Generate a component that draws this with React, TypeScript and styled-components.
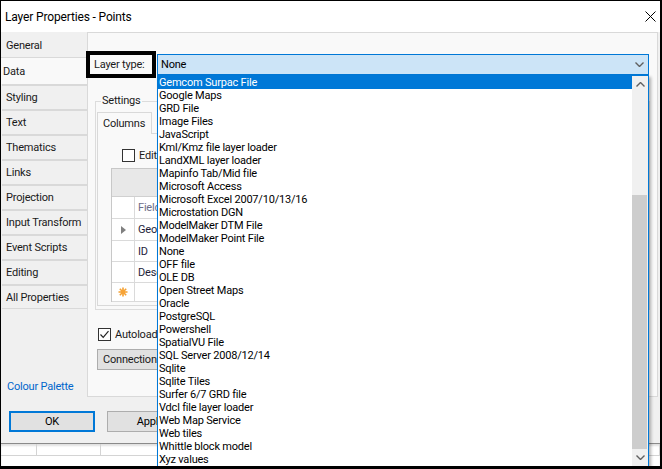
import React from "react";
import styled, { createGlobalStyle } from "styled-components";

const FONT = `Roboto, "Noto Sans", "DejaVu Sans", sans-serif`;

const GlobalStyle = createGlobalStyle`
  html, body { margin: 0; padding: 0; background: #ffffff; }
  body { font-family: ${FONT}; font-size: 11px; }
  *, *::before, *::after { box-sizing: border-box; }
`;

const Frame = styled.div`
  position: relative;
  width: 662px;
  height: 469px;
  border-style: solid;
  border-color: #000;
  border-width: 1px 2px 3px 1px;
  overflow: hidden;
  display: flex;
  flex-direction: column;
  background: #fff;
  font-family: ${FONT};
  font-size: 11px;
  letter-spacing: -0.2px;
  color: #000;
`;

const Window = styled.div`
  flex: 0 0 443px;
  display: flex;
  flex-direction: column;
  background: #f0f0f0;
  border-bottom: 1px solid #8a8a8a;
`;

const TitleBar = styled.div`
  flex: 0 0 31px;
  background: #fff;
  display: flex;
  align-items: center;
  justify-content: space-between;
  padding: 0 4px 0 4px;
`;

const Title = styled.span`
  font-size: 12px;
  line-height: 16px;
  letter-spacing: -0.15px;
`;

const Body = styled.div`
  flex: 0 0 365px;
  display: flex;
`;

const Sidebar = styled.nav`
  width: 86px;
  display: flex;
  flex-direction: column;
  padding-top: 1px;
`;

const SideTab = styled.div<{ $kind: "first" | "selected" | "normal"; $last?: boolean }>`
  display: flex;
  align-items: center;
  white-space: nowrap;
  height: ${(p) => (p.$kind === "first" ? 24 : p.$kind === "selected" ? 27 : 25)}px;
  margin-left: ${(p) => (p.$kind === "selected" ? 0 : 1)}px;
  padding-left: ${(p) => (p.$kind === "selected" ? 2 : 4)}px;
  background: ${(p) => (p.$kind === "selected" ? "#f9f9f9" : "#f0f0f0")};
  border-top: ${(p) => (p.$kind === "first" ? "0" : p.$kind === "selected" ? "1px" : "2px")} solid #d9d9d9;
  border-bottom: ${(p) => (p.$last ? "1px solid #d9d9d9" : "0")};
  color: #1a1a1a;
`;

const SideSpacer = styled.div`
  flex: 1;
`;

const PaletteLink = styled.a`
  color: #0066cc;
  padding: 0 0 3px 6px;
  line-height: 14px;
  text-decoration: none;
`;

const Panel = styled.section`
  width: 571px;
  border: 1px solid #d9d9d9;
  background: #f9f9f9;
  display: flex;
  flex-direction: column;
  align-items: flex-start;
`;

const TypeRow = styled.div`
  display: flex;
  align-items: flex-start;
  margin: 18px 0 0 -2px;
`;

const LabelBox = styled.div`
  width: 70px;
  height: 27px;
  border: 4px solid #000;
  padding-left: 4px;
  display: flex;
  align-items: center;
  white-space: nowrap;
  background: #f9f9f9;
  color: #1a1a1a;
`;

const Combo = styled.div`
  margin: 3px 0 0 1px;
  width: 492px;
  height: 21px;
  background: #cce4f7;
  border: 1px solid #0078d7;
  display: flex;
  align-items: center;
  justify-content: space-between;
  padding: 0 4px 0 3px;
`;

const GroupBox = styled.fieldset`
  margin: 15px 0 0 7px;
  width: 555px;
  border: 1px solid #dcdcdc;
  padding: 0 0 3px 1px;
  min-width: 0;
`;

const Legend = styled.legend`
  margin-left: 4px;
  padding: 0 1px;
  line-height: 16px;
  font-size: 11px;
  color: #1a1a1a;
`;

const TabStrip = styled.div`
  margin-top: 3px;
  height: 21px;
  display: flex;
`;

const TabHead = styled.div`
  position: relative;
  z-index: 1;
  width: 55px;
  height: 22px;
  border: 1px solid #d9d9d9;
  border-bottom: 0;
  background: #f9f9f9;
  padding-left: 5px;
  display: flex;
  align-items: center;
  color: #1a1a1a;
`;

const TabPage = styled.div`
  width: 550px;
  height: 173px;
  border: 1px solid #d9d9d9;
  background: #f9f9f9;
  display: flex;
  flex-direction: column;
  align-items: flex-start;
`;

const CheckRow = styled.label<{ $top: number; $left: number }>`
  display: flex;
  align-items: center;
  gap: 4px;
  margin: ${(p) => p.$top}px 0 0 ${(p) => p.$left}px;
  white-space: nowrap;
  line-height: 13px;
  color: #1a1a1a;
`;

const CheckBox = styled.span`
  width: 13px;
  height: 13px;
  border: 1px solid #333;
  background: #fff;
  display: flex;
  align-items: center;
  justify-content: center;
`;

const Grid = styled.div`
  margin: 6px 0 0 13px;
  width: 530px;
  height: 134px;
  border: 1px solid #c8c8c8;
  display: flex;
  flex-direction: column;
  background: #fff;
`;

const GridBand = styled.div`
  flex: 0 0 28px;
  background: #e8e8e8;
  border-bottom: 1px solid #d0d0d0;
`;

const GridRow = styled.div<{ $h: number }>`
  flex: 0 0 ${(p) => p.$h}px;
  display: flex;
  border-bottom: 1px solid #dadada;
`;

const RowHead = styled.div`
  width: 23px;
  border-right: 1px solid #dadada;
  display: flex;
  align-items: center;
  justify-content: center;
`;

const Cell = styled.div<{ $header?: boolean }>`
  flex: 1;
  display: flex;
  align-items: center;
  padding-left: 3px;
  color: ${(p) => (p.$header ? "#6d6d88" : "#1e1e3a")};
`;

const Button = styled.div<{ $focused?: boolean }>`
  width: 86px;
  height: 21px;
  background: #e1e1e1;
  border: ${(p) => (p.$focused ? "2px solid #0078d7" : "1px solid #adadad")};
  display: flex;
  align-items: center;
  justify-content: center;
  color: #000;
`;

const ConnButton = styled(Button)`
  width: 100px;
  justify-content: flex-start;
  padding-left: 5px;
  margin: 8px 0 0 9px;
  color: #1a1a1a;
`;

const Footer = styled.div`
  flex: 1;
  display: flex;
  align-items: flex-start;
  gap: 12px;
  padding: 14px 0 0 8px;
`;

const Backdrop = styled.div`
  flex: 1;
  display: flex;
  background: #fff;
  box-shadow: inset 0 2px 2px rgba(0, 0, 0, 0.12);
`;

const BackCell = styled.div<{ $w?: number }>`
  ${(p) => (p.$w ? `flex: 0 0 ${p.$w}px;` : "flex: 1;")}
  border-right: 1px solid #d4d4d4;
  border-bottom: 1px solid #d4d4d4;
  height: 12px;
`;

const DropList = styled.div`
  position: absolute;
  left: 156px;
  top: 74px;
  width: 492px;
  height: 392px;
  border: 1px solid #0078d7;
  background: #fff;
  box-shadow: 2px 2px 3px rgba(0, 0, 0, 0.3);
  display: flex;
  z-index: 5;
`;

const Items = styled.ul`
  flex: 1;
  list-style: none;
  margin: 0;
  padding: 0;
`;

const Item = styled.li<{ $selected?: boolean }>`
  height: 13px;
  line-height: 14px;
  padding-left: 1px;
  white-space: nowrap;
  background: ${(p) => (p.$selected ? "#0078d7" : "transparent")};
  color: ${(p) => (p.$selected ? "#fff" : "#000")};
`;

const ScrollBar = styled.div`
  width: 16px;
  background: #f0f0f0;
  display: flex;
  flex-direction: column;
`;

const ScrollBtn = styled.div`
  flex: 0 0 17px;
  display: flex;
  align-items: center;
  justify-content: center;
`;

const Track = styled.div`
  flex: 1;
  display: flex;
  flex-direction: column;
  justify-content: flex-end;
`;

const Thumb = styled.div`
  height: 254px;
  margin-right: 1px;
  background: #cdcdcd;
`;

const Chevron = ({ up, color = "#606060", w = 8 }: { up?: boolean; color?: string; w?: number }) => (
  <svg width={w + 1} height={w / 2 + 1} viewBox={`0 0 ${w + 1} ${w / 2 + 1}`}>
    <path
      d={up ? `M0.5 ${w / 2 + 0.5} L${w / 2 + 0.5} 0.5 L${w + 0.5} ${w / 2 + 0.5}` : `M0.5 0.5 L${w / 2 + 0.5} ${w / 2 + 0.5} L${w + 0.5} 0.5`}
      fill="none"
      stroke={color}
      strokeWidth="1.4"
    />
  </svg>
);

const sideTabs = [
  "General",
  "Data",
  "Styling",
  "Text",
  "Thematics",
  "Links",
  "Projection",
  "Input Transform",
  "Event Scripts",
  "Editing",
  "All Properties",
];

const layerTypes = [
  "Gemcom Surpac File",
  "Google Maps",
  "GRD File",
  "Image Files",
  "JavaScript",
  "Kml/Kmz file layer loader",
  "LandXML layer loader",
  "Mapinfo Tab/Mid file",
  "Microsoft Access",
  "Microsoft Excel 2007/10/13/16",
  "Microstation DGN",
  "ModelMaker DTM File",
  "ModelMaker Point File",
  "None",
  "OFF file",
  "OLE DB",
  "Open Street Maps",
  "Oracle",
  "PostgreSQL",
  "Powershell",
  "SpatialVU File",
  "SQL Server 2008/12/14",
  "Sqlite",
  "Sqlite Tiles",
  "Surfer 6/7 GRD file",
  "Vdcl file layer loader",
  "Web Map Service",
  "Web tiles",
  "Whittle block model",
  "Xyz values",
];

export default function App() {
  return (
    <>
      <GlobalStyle />
      <Frame>
        <Window>
          <TitleBar>
            <Title>Layer Properties - Points</Title>
            <svg width="11" height="11" viewBox="0 0 11 11">
              <path d="M0.5 0.5 L10.5 10.5 M10.5 0.5 L0.5 10.5" stroke="#000" strokeWidth="1" />
            </svg>
          </TitleBar>
          <Body>
            <Sidebar>
              {sideTabs.map((t, i) => (
                <SideTab
                  key={t}
                  $kind={i === 0 ? "first" : i === 1 ? "selected" : "normal"}
                  $last={i === sideTabs.length - 1}
                >
                  {t}
                </SideTab>
              ))}
              <SideSpacer />
              <PaletteLink>Colour Palette</PaletteLink>
            </Sidebar>
            <Panel>
              <TypeRow>
                <LabelBox>Layer type:</LabelBox>
                <Combo>
                  <span>None</span>
                  <Chevron />
                </Combo>
              </TypeRow>
              <GroupBox>
                <Legend>Settings</Legend>
                <TabStrip>
                  <TabHead>Columns</TabHead>
                </TabStrip>
                <TabPage>
                  <CheckRow $top={15} $left={24}>
                    <CheckBox />
                    Editable columns
                  </CheckRow>
                  <Grid>
                    <GridBand />
                    <GridRow $h={22}>
                      <RowHead />
                      <Cell $header>Field</Cell>
                    </GridRow>
                    <GridRow $h={22}>
                      <RowHead>
                        <svg width="5" height="8" viewBox="0 0 5 8">
                          <path d="M0 0 L5 4 L0 8 Z" fill="#808080" />
                        </svg>
                      </RowHead>
                      <Cell>Geometry</Cell>
                    </GridRow>
                    <GridRow $h={21}>
                      <RowHead />
                      <Cell>ID</Cell>
                    </GridRow>
                    <GridRow $h={21}>
                      <RowHead />
                      <Cell>Description</Cell>
                    </GridRow>
                    <GridRow $h={19}>
                      <RowHead>
                        <svg width="10" height="10" viewBox="0 0 10 10">
                          <g stroke="#f5a030" strokeWidth="1.6">
                            <path d="M5 0.5 V9.5 M0.5 5 H9.5 M1.8 1.8 L8.2 8.2 M8.2 1.8 L1.8 8.2" />
                          </g>
                          <circle cx="5" cy="5" r="2.2" fill="#f7a437" />
                        </svg>
                      </RowHead>
                      <Cell />
                    </GridRow>
                  </Grid>
                </TabPage>
              </GroupBox>
              <CheckRow $top={18} $left={10}>
                <CheckBox>
                  <svg width="11" height="11" viewBox="0 0 11 11">
                    <path d="M1.5 5.5 L4.2 8.3 L9.5 2.2" fill="none" stroke="#222" strokeWidth="1.2" />
                  </svg>
                </CheckBox>
                Autoload columns
              </CheckRow>
              <ConnButton>Connection...</ConnButton>
            </Panel>
          </Body>
          <Footer>
            <Button $focused>OK</Button>
            <Button>Apply</Button>
          </Footer>
        </Window>
        <Backdrop>
          <BackCell $w={36} />
          <BackCell $w={64} />
          <BackCell />
        </Backdrop>
        <DropList>
          <Items>
            {layerTypes.map((t, i) => (
              <Item key={t} $selected={i === 0}>
                {t}
              </Item>
            ))}
          </Items>
          <ScrollBar>
            <ScrollBtn>
              <Chevron up w={8} />
            </ScrollBtn>
            <Track>
              <Thumb />
            </Track>
            <ScrollBtn>
              <Chevron w={8} />
            </ScrollBtn>
          </ScrollBar>
        </DropList>
      </Frame>
    </>
  );
}
